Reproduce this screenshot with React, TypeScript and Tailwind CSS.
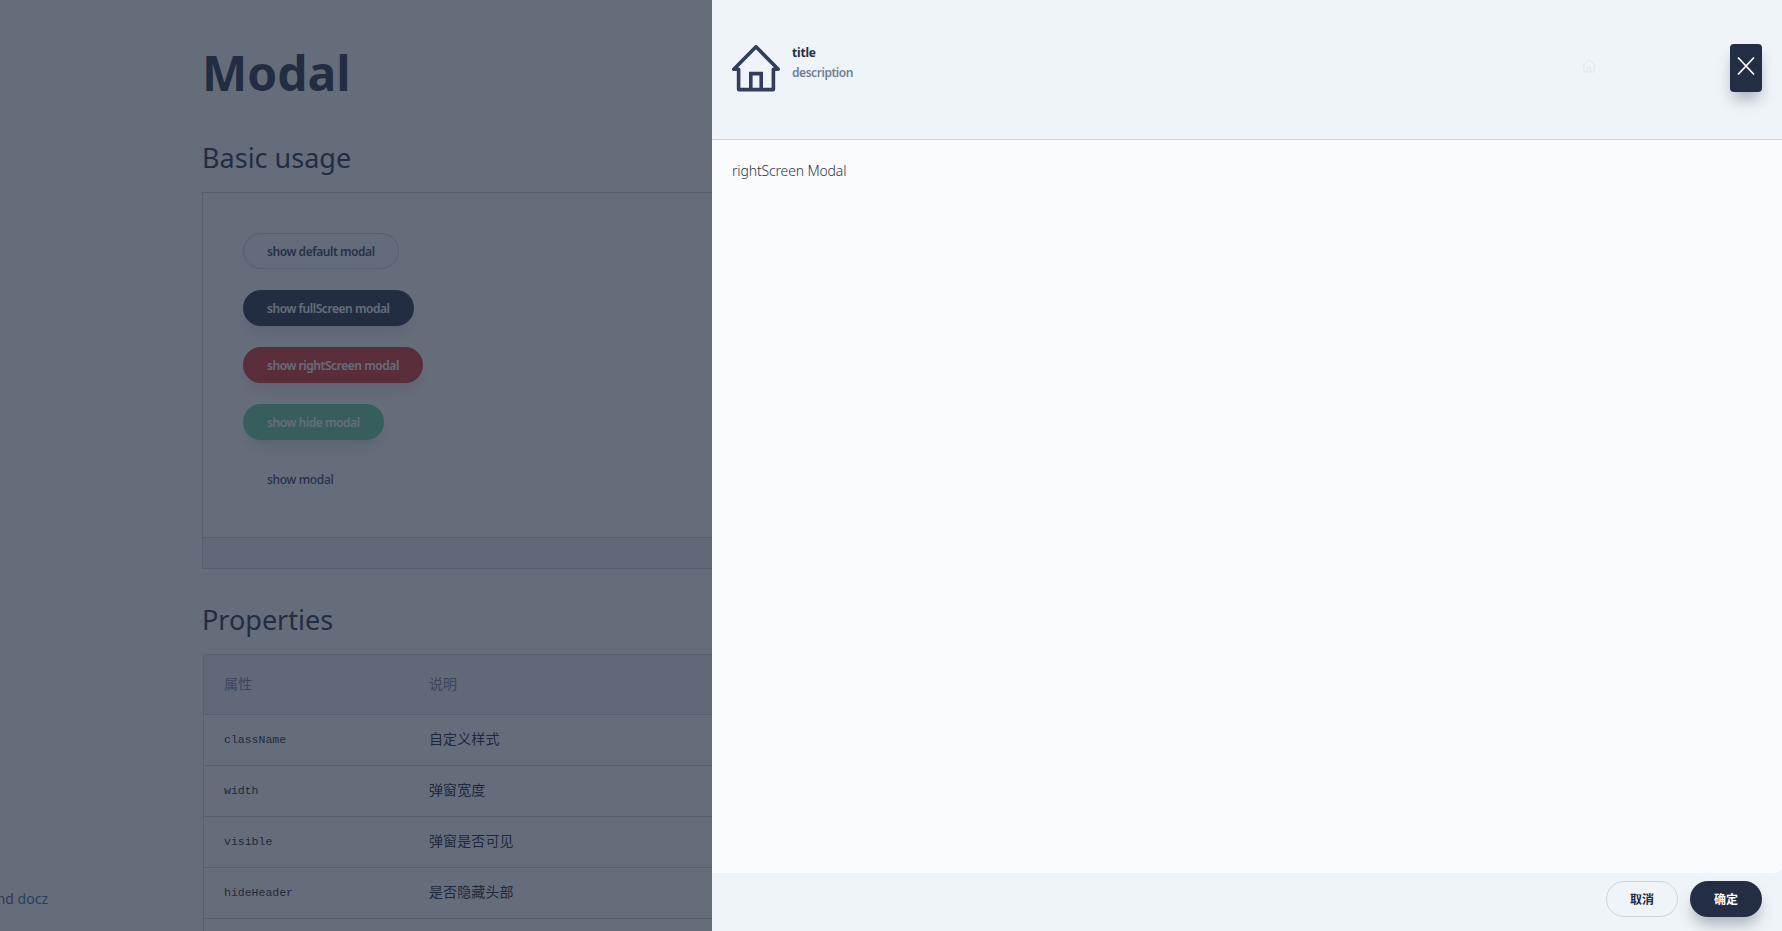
const SANS = "font-['Noto_Sans','Noto_Sans_CJK_SC',sans-serif]";

const rows = [
  ["className", "自定义样式"],
  ["width", "弹窗宽度"],
  ["visible", "弹窗是否可见"],
  ["hideHeader", "是否隐藏头部"],
  ["", ""],
];

function House({ className }: { className?: string }) {
  return (
    <svg viewBox="0 0 48 48" fill="none" stroke="currentColor" strokeWidth="3.6" strokeLinejoin="round" className={className}>
      <path d="M24 1.8 1.8 24.2H6.6V44.6H41.4V24.2H46.2Z" />
      <path d="M18.8 44.6V28.6H29.2V44.6" strokeLinejoin="miter" />
    </svg>
  );
}

function DemoButton({ label, className }: { label: string; className: string }) {
  return (
    <button className={`h-9 pt-[2px] rounded-full text-[12px] tracking-[-0.45px] font-semibold flex items-center ${className}`}>{label}</button>
  );
}

export default function App() {
  return (
    <div className={`relative h-[931px] w-[1782px] overflow-hidden bg-white ${SANS}`}>
      <div className="flex h-full">
        <aside className="w-[202px] shrink-0 flex flex-col justify-end items-end pb-[22px] pr-[154px] overflow-hidden">
          <p className="text-sm whitespace-nowrap text-[#4a5568]">
            Built with and <span className="text-[#2b6cb0]">docz</span>
          </p>
        </aside>
        <main className="w-[1300px] shrink-0 text-[#232d42]">
          <h1 className="pt-[40px] text-[48px] leading-[66px] font-bold">Modal</h1>
          <h2 className="mt-[33px] text-[27px] leading-[38px]">Basic usage</h2>
          <section className="mt-[15px] border border-[#cbd5e0]">
            <div className="p-10 flex flex-col items-start gap-[21px]">
              <DemoButton label="show default modal" className="px-[23px] bg-[#fafbfd] border border-[#cbd5e0] text-[#2d3a57]" />
              <DemoButton label="show fullScreen modal" className="px-6 bg-[#232e45] text-white shadow-lg" />
              <DemoButton label="show rightScreen modal" className="px-6 bg-[#d82f2a] text-white shadow-lg" />
              <DemoButton label="show hide modal" className="px-6 bg-[#62d09c] text-white shadow-lg" />
              <button className="h-9 px-6 pt-[2px] text-[12px] tracking-[-0.3px] font-medium text-[#2d3a57] flex items-center">show modal</button>
            </div>
            <div className="h-[31px] border-t border-[#cbd5e0] bg-[#f1f4f8]" />
          </section>
          <h2 className="mt-[32px] text-[27px] leading-[38px]">Properties</h2>
          <table className="mt-[15px] ml-px w-full border-separate border-spacing-0 border-t border-l border-[#cbd5e0] rounded-tl text-sm">
            <thead>
              <tr className="bg-[#f1f4f8] text-[#718096]">
                <th className="w-[225px] h-[60px] pl-5 pb-[2px] text-left font-normal border-b border-[#cbd5e0]">属性</th>
                <th className="h-[60px] pb-[2px] text-left font-normal border-b border-[#cbd5e0]">说明</th>
              </tr>
            </thead>
            <tbody className="text-[#141a28]">
              {rows.map(([name, desc], i) => (
                <tr key={i}>
                  <td className="h-[51px] pl-5 border-b border-[#cbd5e0] font-['Liberation_Mono',monospace] text-[11.5px]">{name}</td>
                  <td className="h-[51px] pb-[2px] border-b border-[#cbd5e0] tracking-[0.1px]">{desc}</td>
                </tr>
              ))}
            </tbody>
          </table>
        </main>
      </div>

      <div className="absolute inset-0 bg-[#232d42]/70" />

      <div className="absolute inset-y-0 right-0 w-[1070px] flex flex-col bg-[#eff4f8] text-[#232e45]">
        <header className="h-[140px] shrink-0 border-b border-[#cbd5e0] flex items-center pl-5 pr-5">
          <House className="w-12 h-12 text-[#323f5c] mt-[-2px]" />
          <div className="ml-3 mt-[-14px] flex flex-col">
            <span className="text-[12px] tracking-[-0.2px] leading-5 font-bold">title</span>
            <span className="text-[12px] tracking-[-0.45px] leading-5 font-semibold text-[#718096]">description</span>
          </div>
          <House className="ml-auto mr-[134px] w-3.5 h-3.5 text-[#e2e8ed] mt-[-8px]" />
          <button className="w-8 h-12 mt-[-3px] rounded bg-[#232e45] flex items-center justify-center shadow-[0_10px_15px_-3px_rgba(35,46,69,0.35)]">
            <svg viewBox="0 0 20 20" className="w-5 h-5 mb-1" stroke="white" strokeWidth="1.7" fill="none">
              <path d="M2 1.5 18 18.5M18 1.5 2 18.5" />
            </svg>
          </button>
        </header>
        <div className="flex-1 bg-[#fafbfd] rounded-br-lg px-5 pt-[21px] text-sm tracking-[-0.15px] font-light text-[#2d3748]">rightScreen Modal</div>
        <footer className="h-[58px] shrink-0 flex items-start pt-2 justify-end gap-3 pr-5">
          <button className="w-[72px] h-9 pt-[2px] rounded-full border border-[#cbd5e0] text-xs font-bold text-[#232e45]">取消</button>
          <button className="w-[72px] h-9 pt-[2px] rounded-full bg-[#232e45] text-xs font-bold text-white shadow-[0_10px_15px_-3px_rgba(35,46,69,0.35)]">确定</button>
        </footer>
      </div>
    </div>
  );
}
